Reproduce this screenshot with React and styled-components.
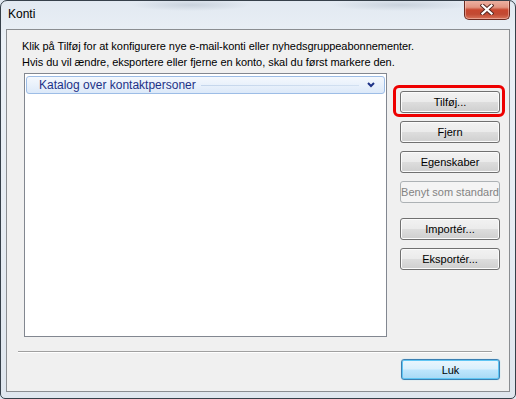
import React from 'react';
import styled, { createGlobalStyle, css } from 'styled-components';

const Global = createGlobalStyle`
  html, body { margin: 0; padding: 0; background: #dfe7f0; }
  body {
    width: 516px; height: 399px; overflow: hidden;
    font-family: "Liberation Sans", Arial, sans-serif;
    font-size: 11px; color: #000;
  }
  * { box-sizing: border-box; }
`;

const Window = styled.div`
  width: 516px;
  height: 399px;
  display: flex;
  flex-direction: column;
  border: 1px solid #36404a;
  border-radius: 7px 7px 5px 5px;
  background:
    radial-gradient(ellipse 60px 6px at 190px 4px, rgba(190,200,212,0.7), transparent),
    radial-gradient(ellipse 70px 6px at 400px 4px, rgba(190,200,212,0.7), transparent),
    linear-gradient(180deg, #e2e9f1 0%, #eaf0f6 10%, #e6ecf3 60%, #dfe6ee 100%);
  overflow: hidden;
`;

const TitleBar = styled.div`
  height: 28px;
  flex: 0 0 28px;
  display: flex;
  justify-content: space-between;
  align-items: flex-start;
  padding-left: 7px;
`;

const Title = styled.div`
  padding-top: 6px;
  line-height: 15px;
  font-size: 12px;
  color: #000;
`;

const CloseButton = styled.div`
  width: 46px;
  height: 20px;
  margin-top: -1px;
  margin-right: 5px;
  border: 1px solid #6b2a20;
  border-top: none;
  border-radius: 0 0 5px 5px;
  background: linear-gradient(180deg, #eeb4a6 0%, #e29582 38%, #c8472f 52%, #c24a33 75%, #d8735a 100%);
  box-shadow: inset 0 0 0 1px rgba(255,220,210,0.45);
  display: flex;
  align-items: center;
  justify-content: center;
`;

const Client = styled.div`
  flex: 1;
  margin: 0 5px 6px 5px;
  border: 1px solid #8a8d91;
  background: #f0f0f0;
  display: flex;
  flex-direction: column;
`;

const Intro = styled.div`
  padding: 8px 0 0 15px;
  line-height: 16px;
  font-size: 11px;
  letter-spacing: -0.05px;
`;

const MainRow = styled.div`
  display: flex;
  margin: 3px 0 0 17px;
`;

const ListBox = styled.div`
  width: 363px;
  height: 264px;
  border: 1px solid #828790;
  background: #fff;
  padding: 2px 0 0 1px;
`;

const GroupHeader = styled.div`
  width: 359px;
  height: 18px;
  border: 1px solid #9dbde6;
  border-radius: 3px;
  background: linear-gradient(180deg, #f4f8fd 0%, #e9f1fb 50%, #dce9f9 100%);
  display: flex;
  align-items: center;
  padding-left: 12px;
`;

const GroupTitle = styled.span`
  font-size: 12px;
  color: #1e3287;
  line-height: 16px;
  white-space: nowrap;
`;

const GroupLine = styled.div`
  flex: 1;
  height: 1px;
  margin: 1px 8px 0 5px;
  background: linear-gradient(90deg, #c5d6ec, #d2e0f1);
`;

const Chevron = styled.svg`
  margin-right: 9px;
  flex: 0 0 auto;
`;

const ButtonCol = styled.div`
  display: flex;
  flex-direction: column;
  margin-left: 13px;
  padding-top: 18px;
`;

const buttonBase = css`
  width: ${p => p.$w || 100}px;
  height: ${p => p.$h || 22}px;
  border-radius: 3px;
  font-family: "Liberation Sans", Arial, sans-serif;
  font-size: 11px;
  display: flex;
  align-items: center;
  justify-content: center;
  padding: 0;
  white-space: nowrap;
`;

const Button = styled.div`
  ${buttonBase};
  position: relative;
  margin-top: ${p => p.$mt || 0}px;
  border: 1px solid ${p => (p.$disabled ? '#adb2b5' : '#707070')};
  color: ${p => (p.$disabled ? '#838383' : '#000')};
  background: ${p =>
    p.$disabled
      ? '#f4f4f4'
      : 'linear-gradient(180deg, #f2f2f2 0%, #ebebeb 48%, #dddddd 52%, #cfcfcf 100%)'};
  box-shadow: ${p => (p.$disabled ? 'none' : 'inset 0 0 0 1px #fbfbfb')};

  ${p =>
    p.$highlight &&
    css`
      &::after {
        content: '';
        position: absolute;
        top: -7px;
        left: -8px;
        right: -6px;
        bottom: -5px;
        border: 3px solid #ee0000;
        border-radius: 6px;
        pointer-events: none;
      }
    `}
`;

const DefaultButton = styled.div`
  ${buttonBase};
  border: 1px solid #3c7fb1;
  color: #000;
  background: linear-gradient(180deg, #eaf6fd 0%, #d9f0fc 48%, #bee6fd 52%, #a7d9f5 100%);
  box-shadow: inset 0 0 0 1px #5fc6f4, 0 0 1px #7ccff5;
`;

const Separator = styled.div`
  height: 2px;
  margin: 14px 17px 0 11px;
  border-top: 1px solid #a0a0a0;
  border-bottom: 1px solid #ffffff;
`;

const Footer = styled.div`
  display: flex;
  justify-content: flex-end;
  padding-right: 9px;
  margin-top: 6px;
`;

export default function App() {
  return (
    <>
      <Global />
      <Window>
        <TitleBar>
          <Title>Konti</Title>
          <CloseButton>
            <svg width="14" height="11" viewBox="0 0 14 11">
              <path d="M2.5 1.5 L11.5 9.5 M11.5 1.5 L2.5 9.5" stroke="#5a2a24" strokeWidth="4.2" strokeLinecap="square" fill="none" />
              <path d="M2.5 1.5 L11.5 9.5 M11.5 1.5 L2.5 9.5" stroke="#ffffff" strokeWidth="2.2" strokeLinecap="square" fill="none" />
            </svg>
          </CloseButton>
        </TitleBar>
        <Client>
          <Intro>
            Klik på Tilføj for at konfigurere nye e-mail-konti eller nyhedsgruppeabonnementer.
            <br />
            Hvis du vil ændre, eksportere eller fjerne en konto, skal du først markere den.
          </Intro>
          <MainRow>
            <ListBox>
              <GroupHeader>
                <GroupTitle>Katalog over kontaktpersoner</GroupTitle>
                <GroupLine />
                <Chevron width="8" height="6" viewBox="0 0 8 6">
                  <path d="M1 1 L4 4 L7 1" stroke="#1e3287" strokeWidth="2" fill="none" />
                </Chevron>
              </GroupHeader>
            </ListBox>
            <ButtonCol>
              <Button $highlight>Tilføj...</Button>
              <Button $mt={8}>Fjern</Button>
              <Button $mt={8}>Egenskaber</Button>
              <Button $mt={8} $disabled>Benyt som standard</Button>
              <Button $mt={15}>Importér...</Button>
              <Button $mt={8}>Eksportér...</Button>
            </ButtonCol>
          </MainRow>
          <Separator />
          <Footer>
            <DefaultButton $w={99} $h={21}>Luk</DefaultButton>
          </Footer>
        </Client>
      </Window>
    </>
  );
}
